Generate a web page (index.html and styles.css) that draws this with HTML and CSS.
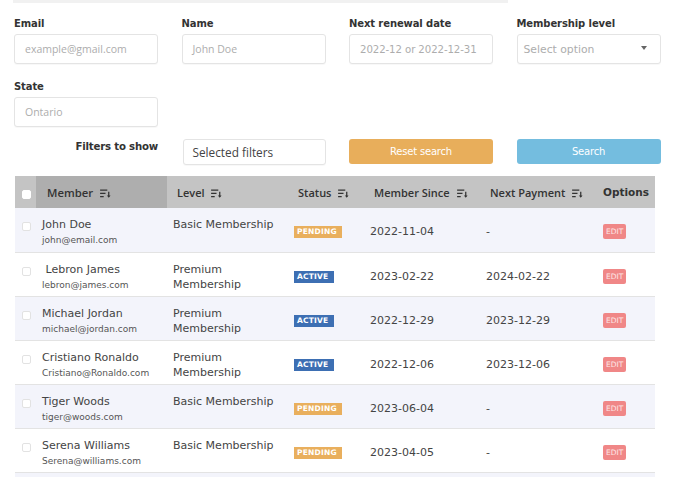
FILE: index.html
```html
<!DOCTYPE html>
<html>
<head>
<meta charset="utf-8">
<link rel="stylesheet" href="styles.css">
</head>
<body>
<div class="topstrip"></div>
<div class="page">
  <form class="filters">
    <div class="field">
      <label class="lbl">Email</label>
      <div class="input ph os">example@gmail.com</div>
    </div>
    <div class="field">
      <label class="lbl">Name</label>
      <div class="input ph os">John Doe</div>
    </div>
    <div class="field">
      <label class="lbl">Next renewal date</label>
      <div class="input ph date">2022-12 or 2022-12-31</div>
    </div>
    <div class="field">
      <label class="lbl">Membership level</label>
      <div class="input ph select">Select option<span class="caret"></span></div>
    </div>
    <div class="field">
      <label class="lbl">State</label>
      <div class="input ph os">Ontario</div>
    </div>
    <div class="row3">
      <div class="ftitle">Filters to show</div>
      <div class="input small os dark">Selected filters</div>
      <div class="btn reset">Reset search</div>
      <div class="btn search">Search</div>
    </div>
  </form>

  <table class="tbl">
    <colgroup>
      <col style="width:21px"><col style="width:131px"><col style="width:121px"><col style="width:76px"><col style="width:116px"><col style="width:117px"><col style="width:58px">
    </colgroup>
    <thead>
      <tr>
        <th class="cb"><span class="box white"></span></th>
        <th class="sorted os">Member <svg class="sort" viewBox="0 0 12 10"><path d="M0 1.2H8M0 4.8H6M0 8.4H4" /><path d="M9.6 3V8.5" /><path class="ah" d="M7.6 7.2L9.6 9.6L11.6 7.2Z"/></svg></th>
        <th class="os">Level <svg class="sort" viewBox="0 0 12 10"><path d="M0 1.2H8M0 4.8H6M0 8.4H4" /><path d="M9.6 3V8.5" /><path class="ah" d="M7.6 7.2L9.6 9.6L11.6 7.2Z"/></svg></th>
        <th class="os">Status <svg class="sort" viewBox="0 0 12 10"><path d="M0 1.2H8M0 4.8H6M0 8.4H4" /><path d="M9.6 3V8.5" /><path class="ah" d="M7.6 7.2L9.6 9.6L11.6 7.2Z"/></svg></th>
        <th class="os">Member Since <svg class="sort" viewBox="0 0 12 10"><path d="M0 1.2H8M0 4.8H6M0 8.4H4" /><path d="M9.6 3V8.5" /><path class="ah" d="M7.6 7.2L9.6 9.6L11.6 7.2Z"/></svg></th>
        <th class="os">Next Payment <svg class="sort" viewBox="0 0 12 10"><path d="M0 1.2H8M0 4.8H6M0 8.4H4" /><path d="M9.6 3V8.5" /><path class="ah" d="M7.6 7.2L9.6 9.6L11.6 7.2Z"/></svg></th>
        <th class="opt">Options</th>
      </tr>
    </thead>
    <tbody>
      <tr>
        <td class="cb"><span class="box"></span></td>
        <td><div class="nm">John Doe</div><div class="em">john@email.com</div></td>
        <td>Basic Membership</td>
        <td class="st"><span class="badge pending">PENDING</span></td>
        <td class="mid">2022-11-04</td>
        <td class="mid">-</td>
        <td class="ed"><span class="edit">EDIT</span></td>
      </tr>
      <tr>
        <td class="cb"><span class="box"></span></td>
        <td><div class="nm">&nbsp;Lebron James</div><div class="em">lebron@james.com</div></td>
        <td>Premium<br>Membership</td>
        <td class="st"><span class="badge active">ACTIVE</span></td>
        <td class="mid">2023-02-22</td>
        <td class="mid">2024-02-22</td>
        <td class="ed"><span class="edit">EDIT</span></td>
      </tr>
      <tr>
        <td class="cb"><span class="box"></span></td>
        <td><div class="nm">Michael Jordan</div><div class="em">michael@jordan.com</div></td>
        <td>Premium<br>Membership</td>
        <td class="st"><span class="badge active">ACTIVE</span></td>
        <td class="mid">2022-12-29</td>
        <td class="mid">2023-12-29</td>
        <td class="ed"><span class="edit">EDIT</span></td>
      </tr>
      <tr>
        <td class="cb"><span class="box"></span></td>
        <td><div class="nm">Cristiano Ronaldo</div><div class="em">Cristiano@Ronaldo.com</div></td>
        <td>Premium<br>Membership</td>
        <td class="st"><span class="badge active">ACTIVE</span></td>
        <td class="mid">2022-12-06</td>
        <td class="mid">2023-12-06</td>
        <td class="ed"><span class="edit">EDIT</span></td>
      </tr>
      <tr>
        <td class="cb"><span class="box"></span></td>
        <td><div class="nm">Tiger Woods</div><div class="em">tiger@woods.com</div></td>
        <td>Basic Membership</td>
        <td class="st"><span class="badge pending">PENDING</span></td>
        <td class="mid">2023-06-04</td>
        <td class="mid">-</td>
        <td class="ed"><span class="edit">EDIT</span></td>
      </tr>
      <tr>
        <td class="cb"><span class="box"></span></td>
        <td><div class="nm">Serena Williams</div><div class="em">Serena@williams.com</div></td>
        <td>Basic Membership</td>
        <td class="st"><span class="badge pending">PENDING</span></td>
        <td class="mid">2023-04-05</td>
        <td class="mid">-</td>
        <td class="ed"><span class="edit">EDIT</span></td>
      </tr>
      <tr class="tail"><td colspan="7"></td></tr>
    </tbody>
  </table>
</div>
</body>
</html>
```

FILE: styles.css
```css
* { box-sizing: border-box; }
html, body { margin: 0; padding: 0; background: #fff; }
body {
  font-family: "DejaVu Sans", "Noto Sans", sans-serif;
  color: #3d3d3d;
  font-size: 11px;
}
.topstrip {
  height: 3px;
  margin-left: 13px;
  width: 495px;
  background: #f1f1f1;
}
.page { padding: 0 0 0 14px; }
.filters {
  display: grid;
  grid-template-columns: repeat(4, 144px);
  column-gap: 23.5px;
  row-gap: 16px;
  padding-top: 14px;
  margin: 0;
}
.field { display: flex; flex-direction: column; }
.lbl {
  font-weight: bold;
  font-size: 10px;
  letter-spacing: -0.1px;
  color: #333;
  height: 14px;
  line-height: 14px;
  margin-bottom: 3px;
}
.input {
  height: 30px;
  border: 1px solid #e4e4e4;
  border-radius: 3px;
  background: #fff;
  box-shadow: 0 1px 1px rgba(0,0,0,0.03);
  display: flex;
  align-items: center;
  padding-left: 10px;
  font-size: 10.5px;
  color: #333;
}
.os { font-family: "Open Sans", sans-serif; }
.ph { color: #adadad; }
.date { font-size: 10.2px; letter-spacing: -0.1px; }
.select { position: relative; padding-left: 6px; font-size: 10.8px; }
.caret {
  position: absolute;
  right: 13px;
  top: 11px;
  width: 0; height: 0;
  border-left: 3px solid transparent;
  border-right: 3px solid transparent;
  border-top: 4px solid #666;
}
.row3 {
  grid-column: 1 / 5;
  display: grid;
  grid-template-columns: repeat(4, 144px);
  column-gap: 23.5px;
  margin-top: -4px;
}
.ftitle {
  text-align: right;
  font-weight: bold;
  font-size: 10.2px;
  letter-spacing: -0.2px;
  color: #333;
  padding-top: 2px;
  margin-left: -3px;
}
.input.small {
  height: 26px;
  margin-left: 1px;
  font-size: 11.8px;
  color: #444;
  padding-left: 9px;
}
.dark { color: #444; }
.btn {
  height: 25px;
  border-radius: 3px;
  color: #fff;
  font-size: 10px;
  display: flex;
  align-items: center;
  justify-content: center;
  letter-spacing: -0.2px;
}
.reset { background: #e8ae5b; }
.search { background: #74bddf; }

.tbl {
  margin-top: 11px;
  margin-left: 1px;
  width: 640px;
  border-collapse: collapse;
  table-layout: fixed;
}
.tbl th {
  height: 32px;
  background: #c4c4c4;
  text-align: left;
  font-size: 10.5px;
  font-weight: 600;
  color: #333;
  padding: 0 0 0 10px;
  white-space: nowrap;
}
.tbl th.os { font-family: "Open Sans", sans-serif; font-size: 11px; }
.tbl th.sorted { background: #aeaeae; padding-left: 11px; font-size: 11.3px; }
.tbl th.opt { font-weight: bold; padding-left: 6px; font-size: 10.5px; }
.tbl th.cb, .tbl td.cb { padding: 0 0 0 7px; }
.sort {
  width: 11px; height: 9px;
  margin-left: 4px;
  vertical-align: -1px;
  fill: none;
  stroke: #333;
  stroke-width: 1.4;
}
.sort .ah { fill: #333; stroke: none; }
.tbl td {
  height: 44px;
  padding: 9px 0 0 6px;
  vertical-align: top;
  border-bottom: 1px solid #e3e3e3;
  font-size: 11px;
  line-height: 15px;
  color: #444;
}
.tbl tbody tr:nth-child(odd) td { background: #f3f4fb; }
.tbl td.mid { padding-top: 16px; }
.tbl td.st { padding-top: 18px; line-height: 12px; }
.tbl td.ed { padding-top: 16px; line-height: 15px; }
.tbl td.cb { vertical-align: top; padding-top: 12px; }
.box {
  display: inline-block;
  width: 9px; height: 9px;
  border: 1px solid #e2e2e2;
  border-radius: 2px;
  background: #fff;
}
.box.white { border-color: #fff; vertical-align: -3px; }
.nm { font-size: 11px; line-height: 15px; }
.em { font-size: 9px; line-height: 14px; color: #555; margin-top: 1px; }
.badge {
  display: inline-block;
  vertical-align: top;
  color: #fff;
  font-size: 7.5px;
  font-weight: bold;
  height: 12px;
  line-height: 12px;
  padding: 0 3px;
  letter-spacing: 0.2px;
}
.pending { background: #e9af5d; width: 48px; }
.active { background: #3d6fb3; width: 40px; }
.edit {
  display: inline-block;
  vertical-align: top;
  background: #f08787;
  color: #fde7e7;
  font-size: 7.5px;
  height: 15px;
  line-height: 15px;
  padding: 0 3px;
  border-radius: 2px;
}
.tbl tr.tail td { height: 6px; padding: 0; border: none; background: #f3f4fb; }
```
